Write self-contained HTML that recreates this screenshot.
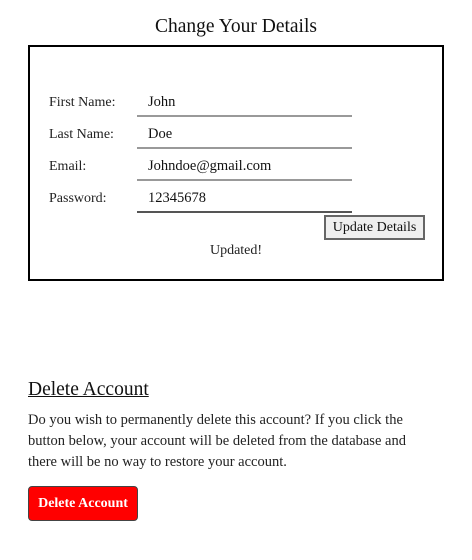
<!DOCTYPE html>
<html><head><style>
body{margin:0;width:472px;height:560px;background:#fff;font-family:"Liberation Serif",serif;color:#222;position:relative;overflow:hidden}
.a{position:absolute;white-space:nowrap}
.lbl{font-size:14px;left:49px}
.val{font-size:14.5px;left:148px;color:#111}
.ln{position:absolute;left:137px;width:215px;height:0;border-top:2px solid #999}
</style></head><body>
<div class="a" style="left:0;width:472px;text-align:center;top:16px;font-size:19.5px;color:#111">Change Your Details</div>
<div style="position:absolute;left:28px;top:45px;width:412px;height:232px;border:2px solid #000"></div>
<div class="a lbl" style="top:95px">First Name:</div>
<div class="a lbl" style="top:127px">Last Name:</div>
<div class="a lbl" style="top:159px">Email:</div>
<div class="a lbl" style="top:191px">Password:</div>
<div class="a val" style="top:94px">John</div>
<div class="a val" style="top:126px">Doe</div>
<div class="a val" style="top:158px">Johndoe@gmail.com</div>
<div class="a val" style="top:190px">12345678</div>
<div class="ln" style="top:115px"></div>
<div class="ln" style="top:147px"></div>
<div class="ln" style="top:179px"></div>
<div class="ln" style="top:211px;border-color:#555"></div>
<div class="a" style="left:324px;top:215px;width:97px;height:21px;border:2px solid #666;background:#efefef;font-size:14px;text-align:center;line-height:21px;color:#111">Update Details</div>
<div class="a" style="left:0;width:472px;text-align:center;top:243px;font-size:14px">Updated!</div>
<div class="a" style="left:28px;top:379px;font-size:19.5px;text-decoration:underline;color:#111">Delete Account</div>
<div class="a" style="left:28px;top:410px;font-size:14.5px;line-height:21px;white-space:normal;width:405px">Do you wish to permanently delete this account? If you click the button below, your account will be deleted from the database and there will be no way to restore your account.</div>
<div class="a" style="left:28px;top:486px;width:108px;height:33px;background:#f00;border:1px solid #444;border-radius:4px;color:#fff;font-weight:bold;font-size:14px;text-align:center;line-height:34px">Delete Account</div>
</body></html>
